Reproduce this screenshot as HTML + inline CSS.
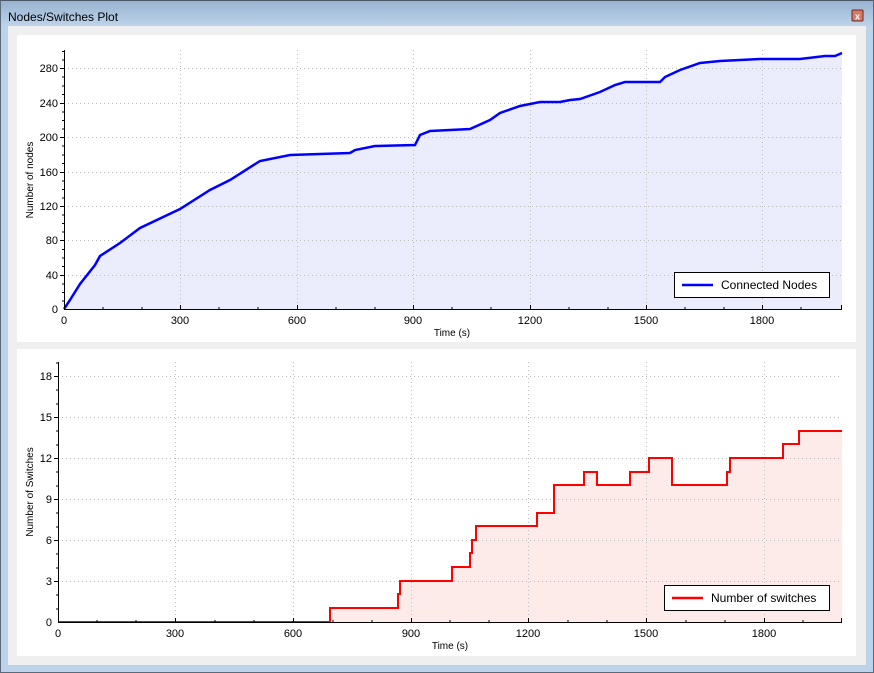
<!DOCTYPE html>
<html><head><style>
html,body{margin:0;padding:0;width:874px;height:673px;overflow:hidden;background:#bcd3ea}
svg{display:block;font-family:"Liberation Sans",sans-serif}
</style></head><body>
<svg width="874" height="673" viewBox="0 0 874 673">
<defs>
<linearGradient id="tb" x1="0" y1="0" x2="0" y2="1"><stop offset="0" stop-color="#97b1cf"/><stop offset="1" stop-color="#bcd3ea"/></linearGradient>
</defs>
<rect x="0" y="0" width="874" height="673" fill="#bcd3ea"/>
<rect x="0" y="0" width="874" height="26" fill="url(#tb)"/>
<rect x="0" y="0" width="874" height="1" fill="#4a5664"/>
<rect x="0" y="0" width="1" height="673" fill="#5a6a7a"/>
<rect x="873" y="0" width="1" height="673" fill="#5a6a7a"/>
<rect x="0" y="672" width="874" height="1" fill="#5a6a7a"/>
<text x="8" y="21" font-size="12" fill="#000">Nodes/Switches Plot</text>
<rect x="852" y="10" width="11" height="11" rx="1" fill="#d47a66" stroke="#6b2a20"/>
<text x="857.5" y="19.5" font-size="9" font-weight="bold" fill="#fff" text-anchor="middle">x</text>
<rect x="8" y="26" width="858" height="639" fill="#efefef"/>
<rect x="17" y="35" width="839" height="307" fill="#fff"/>
<rect x="17" y="349" width="839" height="307" fill="#fff"/>

<!-- TOP PLOT -->
<polygon fill="#ebedfc" points="64,309 70,300 80,284 95,265 100,256 120,243 140,228 180,209 210,190 230,180 260,161 290,155 350,153 355,150 375,146 415,145 420,135 430,131 450,130 470,129 490,120 500,113 520,106 540,102 560,102 570,100 580,99 600,92 615,85 625,82 660,82 665,77 680,70 700,63 720,61 760,59 800,59 825,56 835,56 842,53 842,309"/>
<g stroke="#bbb" stroke-dasharray="1,3" stroke-width="1">
<line x1="64" y1="68.5" x2="842" y2="68.5"/><line x1="64" y1="103.5" x2="842" y2="103.5"/><line x1="64" y1="137.5" x2="842" y2="137.5"/><line x1="64" y1="172.5" x2="842" y2="172.5"/><line x1="64" y1="206.5" x2="842" y2="206.5"/><line x1="64" y1="240.5" x2="842" y2="240.5"/><line x1="64" y1="275.5" x2="842" y2="275.5"/>
<line x1="180.5" y1="50" x2="180.5" y2="309"/><line x1="297.5" y1="50" x2="297.5" y2="309"/><line x1="413.5" y1="50" x2="413.5" y2="309"/><line x1="530.5" y1="50" x2="530.5" y2="309"/><line x1="646.5" y1="50" x2="646.5" y2="309"/><line x1="762.5" y1="50" x2="762.5" y2="309"/>
</g>
<polyline fill="none" stroke="#0000ff" stroke-width="2.5" points="64,309 70,300 80,284 95,265 100,256 120,243 140,228 180,209 210,190 230,180 260,161 290,155 350,153 355,150 375,146 415,145 420,135 430,131 450,130 470,129 490,120 500,113 520,106 540,102 560,102 570,100 580,99 600,92 615,85 625,82 660,82 665,77 680,70 700,63 720,61 760,59 800,59 825,56 835,56 842,53"/>
<g stroke="#000" stroke-width="1">
<line x1="64.5" y1="50" x2="64.5" y2="310"/><line x1="64" y1="309.5" x2="842" y2="309.5"/>
<line x1="60" y1="68.5" x2="64" y2="68.5"/><line x1="60" y1="103.5" x2="64" y2="103.5"/><line x1="60" y1="137.5" x2="64" y2="137.5"/><line x1="60" y1="172.5" x2="64" y2="172.5"/><line x1="60" y1="206.5" x2="64" y2="206.5"/><line x1="60" y1="240.5" x2="64" y2="240.5"/><line x1="60" y1="275.5" x2="64" y2="275.5"/>
<line x1="62" y1="51.5" x2="64" y2="51.5"/><line x1="62" y1="60" x2="64" y2="60"/><line x1="62" y1="77" x2="64" y2="77"/><line x1="62" y1="86" x2="64" y2="86"/><line x1="62" y1="94.5" x2="64" y2="94.5"/>
<line x1="62" y1="112" x2="64" y2="112"/><line x1="62" y1="120.5" x2="64" y2="120.5"/><line x1="62" y1="129" x2="64" y2="129"/>
<line x1="62" y1="146" x2="64" y2="146"/><line x1="62" y1="155" x2="64" y2="155"/><line x1="62" y1="163.5" x2="64" y2="163.5"/>
<line x1="62" y1="181" x2="64" y2="181"/><line x1="62" y1="189.5" x2="64" y2="189.5"/><line x1="62" y1="198" x2="64" y2="198"/>
<line x1="62" y1="215" x2="64" y2="215"/><line x1="62" y1="223.5" x2="64" y2="223.5"/><line x1="62" y1="232" x2="64" y2="232"/>
<line x1="62" y1="249.5" x2="64" y2="249.5"/><line x1="62" y1="258" x2="64" y2="258"/><line x1="62" y1="266.5" x2="64" y2="266.5"/>
<line x1="62" y1="284" x2="64" y2="284"/><line x1="62" y1="292.5" x2="64" y2="292.5"/><line x1="62" y1="301" x2="64" y2="301"/>
<line x1="180.5" y1="309" x2="180.5" y2="305"/><line x1="297.5" y1="309" x2="297.5" y2="305"/><line x1="413.5" y1="309" x2="413.5" y2="305"/><line x1="530.5" y1="309" x2="530.5" y2="305"/><line x1="646.5" y1="309" x2="646.5" y2="305"/><line x1="762.5" y1="309" x2="762.5" y2="305"/>
<line x1="103" y1="309" x2="103" y2="307"/><line x1="142" y1="309" x2="142" y2="307"/><line x1="219" y1="309" x2="219" y2="307"/><line x1="258" y1="309" x2="258" y2="307"/><line x1="336" y1="309" x2="336" y2="307"/><line x1="375" y1="309" x2="375" y2="307"/><line x1="452" y1="309" x2="452" y2="307"/><line x1="491" y1="309" x2="491" y2="307"/><line x1="569" y1="309" x2="569" y2="307"/><line x1="608" y1="309" x2="608" y2="307"/><line x1="685" y1="309" x2="685" y2="307"/><line x1="724" y1="309" x2="724" y2="307"/><line x1="801" y1="309" x2="801" y2="307"/><line x1="841.5" y1="309" x2="841.5" y2="305"/>
</g>
<g font-size="11" text-anchor="end" fill="#000">
<text x="58" y="72">280</text><text x="58" y="107">240</text><text x="58" y="141">200</text><text x="58" y="176">160</text><text x="58" y="210">120</text><text x="58" y="244">80</text><text x="58" y="279">40</text><text x="58" y="313">0</text>
</g>
<g font-size="11" text-anchor="middle" fill="#000">
<text x="64" y="324">0</text><text x="180" y="324">300</text><text x="297" y="324">600</text><text x="413" y="324">900</text><text x="530" y="324">1200</text><text x="646" y="324">1500</text><text x="762" y="324">1800</text>
<text x="452" y="336" font-size="10">Time (s)</text>
<text transform="translate(33,180) rotate(-90)" font-size="10">Number of nodes</text>
</g>
<rect x="674.5" y="272.5" width="155" height="25" fill="#fff" stroke="#000"/>
<line x1="682" y1="285" x2="713" y2="285" stroke="#0000ff" stroke-width="2.5"/>
<text x="721" y="289" font-size="12">Connected Nodes</text>

<!-- BOTTOM PLOT -->
<polygon fill="#fdebea" points="330,622 330,608 398,608 398,594 400,594 400,581 452,581 452,567 470,567 470,553 472,553 472,540 476,540 476,526 537,526 537,513 554,513 554,485 584,485 584,472 597,472 597,485 630,485 630,472 649,472 649,458 672,458 672,485 727,485 727,472 730,472 730,458 783,458 783,444 799,444 799,431 842,431 842,622"/>
<g stroke="#bbb" stroke-dasharray="1,3" stroke-width="1">
<line x1="58" y1="376.5" x2="842" y2="376.5"/><line x1="58" y1="417.5" x2="842" y2="417.5"/><line x1="58" y1="458.5" x2="842" y2="458.5"/><line x1="58" y1="499.5" x2="842" y2="499.5"/><line x1="58" y1="540.5" x2="842" y2="540.5"/><line x1="58" y1="581.5" x2="842" y2="581.5"/>
<line x1="175.5" y1="362" x2="175.5" y2="622"/><line x1="293.5" y1="362" x2="293.5" y2="622"/><line x1="411.5" y1="362" x2="411.5" y2="622"/><line x1="528.5" y1="362" x2="528.5" y2="622"/><line x1="646.5" y1="362" x2="646.5" y2="622"/><line x1="764.5" y1="362" x2="764.5" y2="622"/>
</g>
<polyline fill="none" stroke="#ff0000" stroke-width="2" points="58,622 330,622 330,608 398,608 398,594 400,594 400,581 452,581 452,567 470,567 470,553 472,553 472,540 476,540 476,526 537,526 537,513 554,513 554,485 584,485 584,472 597,472 597,485 630,485 630,472 649,472 649,458 672,458 672,485 727,485 727,472 730,472 730,458 783,458 783,444 799,444 799,431 842,431"/>
<g stroke="#000" stroke-width="1">
<line x1="58.5" y1="362" x2="58.5" y2="623"/><line x1="58" y1="622.5" x2="842" y2="622.5"/>
<line x1="54" y1="376.5" x2="58" y2="376.5"/><line x1="54" y1="417.5" x2="58" y2="417.5"/><line x1="54" y1="458.5" x2="58" y2="458.5"/><line x1="54" y1="499.5" x2="58" y2="499.5"/><line x1="54" y1="540.5" x2="58" y2="540.5"/><line x1="54" y1="581.5" x2="58" y2="581.5"/>
<line x1="56" y1="363" x2="58" y2="363"/><line x1="56" y1="390" x2="58" y2="390"/><line x1="56" y1="404" x2="58" y2="404"/><line x1="56" y1="431" x2="58" y2="431"/><line x1="56" y1="445" x2="58" y2="445"/><line x1="56" y1="472" x2="58" y2="472"/><line x1="56" y1="486" x2="58" y2="486"/><line x1="56" y1="513" x2="58" y2="513"/><line x1="56" y1="527" x2="58" y2="527"/><line x1="56" y1="554" x2="58" y2="554"/><line x1="56" y1="568" x2="58" y2="568"/><line x1="56" y1="595" x2="58" y2="595"/><line x1="56" y1="609" x2="58" y2="609"/>
<line x1="175.5" y1="622" x2="175.5" y2="618"/><line x1="293.5" y1="622" x2="293.5" y2="618"/><line x1="411.5" y1="622" x2="411.5" y2="618"/><line x1="528.5" y1="622" x2="528.5" y2="618"/><line x1="646.5" y1="622" x2="646.5" y2="618"/><line x1="764.5" y1="622" x2="764.5" y2="618"/>
<line x1="97" y1="622" x2="97" y2="620"/><line x1="136" y1="622" x2="136" y2="620"/><line x1="215" y1="622" x2="215" y2="620"/><line x1="254" y1="622" x2="254" y2="620"/><line x1="333" y1="622" x2="333" y2="620"/><line x1="372" y1="622" x2="372" y2="620"/><line x1="450" y1="622" x2="450" y2="620"/><line x1="489" y1="622" x2="489" y2="620"/><line x1="568" y1="622" x2="568" y2="620"/><line x1="607" y1="622" x2="607" y2="620"/><line x1="686" y1="622" x2="686" y2="620"/><line x1="725" y1="622" x2="725" y2="620"/><line x1="803" y1="622" x2="803" y2="620"/><line x1="841.5" y1="622" x2="841.5" y2="618"/>
</g>
<g font-size="11" text-anchor="end" fill="#000">
<text x="52" y="380">18</text><text x="52" y="421">15</text><text x="52" y="462">12</text><text x="52" y="503">9</text><text x="52" y="544">6</text><text x="52" y="585">3</text><text x="52" y="626">0</text>
</g>
<g font-size="11" text-anchor="middle" fill="#000">
<text x="58" y="637">0</text><text x="175" y="637">300</text><text x="293" y="637">600</text><text x="411" y="637">900</text><text x="528" y="637">1200</text><text x="646" y="637">1500</text><text x="764" y="637">1800</text>
<text x="450" y="649" font-size="10">Time (s)</text>
<text transform="translate(33,492) rotate(-90)" font-size="10">Number of Switches</text>
</g>
<rect x="664.5" y="585.5" width="165" height="25" fill="#fff" stroke="#000"/>
<line x1="672" y1="598" x2="703" y2="598" stroke="#ff0000" stroke-width="2.5"/>
<text x="711" y="602" font-size="12">Number of switches</text>
</svg>
</body></html>
